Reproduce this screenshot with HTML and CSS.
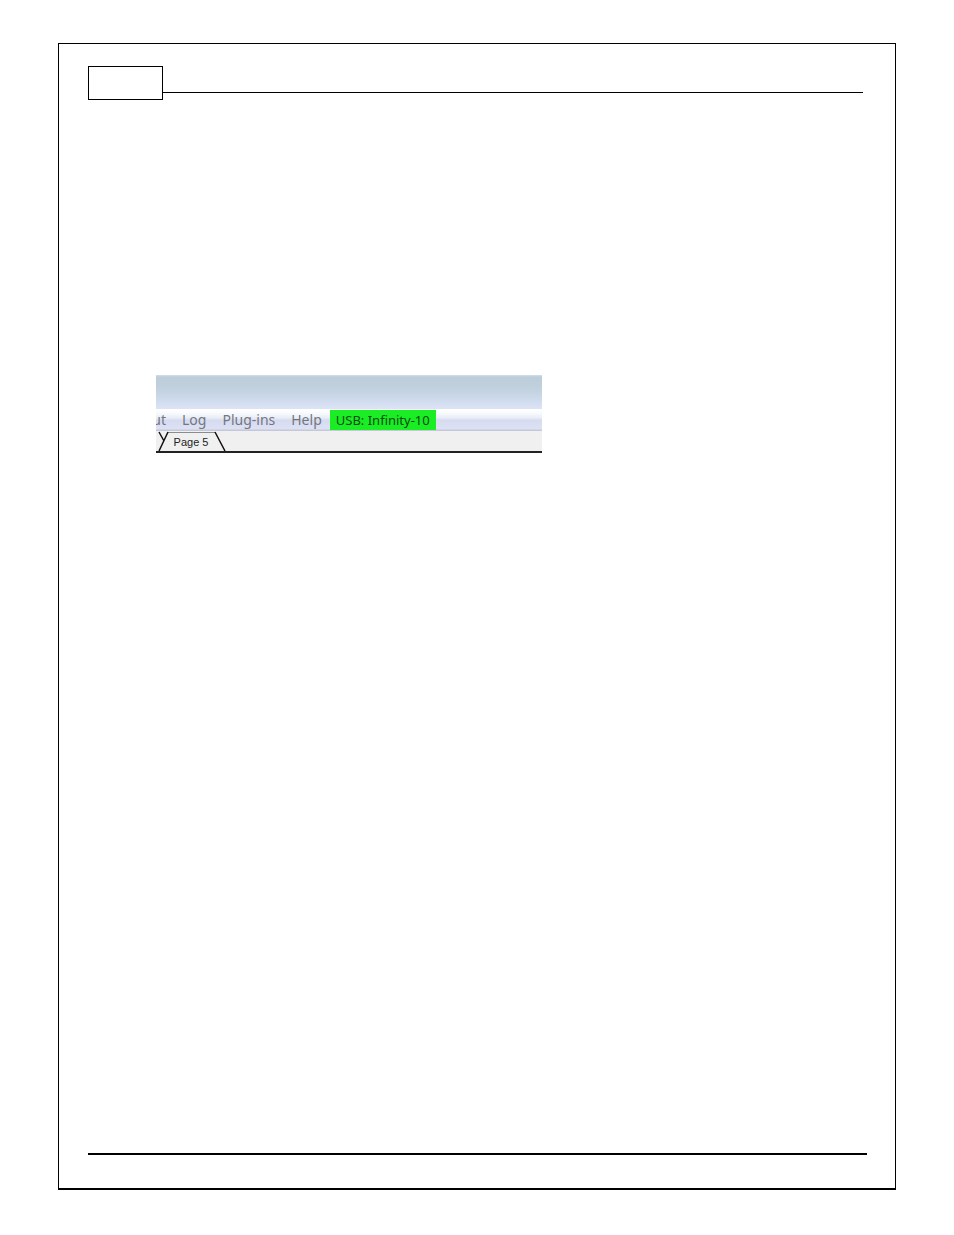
FILE: index.html
```
<!DOCTYPE html>
<html lang="en">
<head>
  <meta charset="UTF-8" />
  <meta name="viewport" content="width=device-width, initial-scale=1.0"/>
  <title>USB: Infinity-10</title>
  <link rel="stylesheet" href="styles.css">
</head>
<body>
  <div class="sheet">
    <header class="sheet-header">
      <div class="page-box"></div>
      <div class="header-rule"></div>
    </header>

    <main class="sheet-body">
      <div class="window">
        <div class="title-bar"></div>
        <nav class="menu">
          <button class="menu-item cut">ut</button>
          <button class="menu-item">Log</button>
          <button class="menu-item">Plug-ins</button>
          <button class="menu-item">Help</button>
          <button class="menu-item status">USB: Infinity-10</button>
        </nav>
        <div class="tabs">
          <button class="tab">
            <svg class="tab-shape" width="72" height="20" viewBox="0 0 72 20" aria-hidden="true">
              <path d="M12 1.500 H59" fill="none" stroke="#8c8c8c"/>
              <path d="M3 20 L12 1 M3 1 L8 10 M59 1 L69 20" fill="none" stroke="#111" stroke-width="1.500"/>
            </svg>
            <span class="tab-label">Page 5</span>
          </button>
        </div>
      </div>
    </main>

    <footer class="sheet-footer"></footer>
  </div>
</body>
</html>
```

FILE: styles.css
```
* {
  box-sizing: border-box;
}

body {
  margin: 0;
  padding: 43px 58px 45px;
  min-height: 100vh;
  display: flex;
  background: white;
  color: black;
  font-family: "Liberation Sans", Arial, sans-serif;
}

.sheet {
  flex: 1;
  display: flex;
  flex-direction: column;
  padding: 22px 28px 33px 29px;
  border: 1px solid black;
  border-bottom-width: 2px;
}

.sheet-header {
  display: flex;
  margin-right: 4px;
}

.page-box {
  width: 75px;
  height: 34px;
  border: 1px solid black;
}

.header-rule {
  flex: 1;
  height: 27px;
  border-bottom: 1px solid black;
}

.sheet-body {
  flex: 1;
  padding: 275px 0 40px 68px;
}

.sheet-footer {
  border-bottom: 2px solid black;
}

.window {
  max-width: 386px;
  overflow: hidden;
}

.title-bar {
  height: 34px;
  background: linear-gradient(#d3e0ea 0, #bdccda 2px, #c0d0dd 12px, #c8d6e6 20px, #d6e0f3 30px, #dde3f3 100%);
}

.menu {
  display: flex;
  height: 22px;
  background: linear-gradient(#fff 0, #f8fbfd 4px, #e8edf6 9px, #d7dbef 11px, #dde1f5 20px, #c5c8d6 21px);
}

.menu-item {
  padding: 0 8px;
  border: none;
  background: none;
  color: #74767f;
  font: 14px/20px "Noto Sans", sans-serif;
  white-space: nowrap;
}

/* scrolled half out of view on the left */
.menu-item.cut {
  display: flex;
  align-items: center;
  justify-content: flex-end;
  width: 18px;
  padding-left: 0;
}

.menu-item.status {
  height: 20px;
  margin-top: 1px;
  padding: 0 6px;
  background: #1bed25;
  color: #0c4a14;
  font-size: 13px;
}

.tabs {
  display: flex;
  height: 22px;
  background: #f0f0f0;
  border-bottom: 2px solid #222;
}

.tab {
  position: relative;
  width: 70px;
  padding: 0;
  border: none;
  background: none;
  color: #222;
  font: 11px/22px "Liberation Sans", Arial, sans-serif;
}

.tab-shape {
  position: absolute;
  top: 0;
  left: 0;
}

.tab-label {
  position: relative;
}
```
